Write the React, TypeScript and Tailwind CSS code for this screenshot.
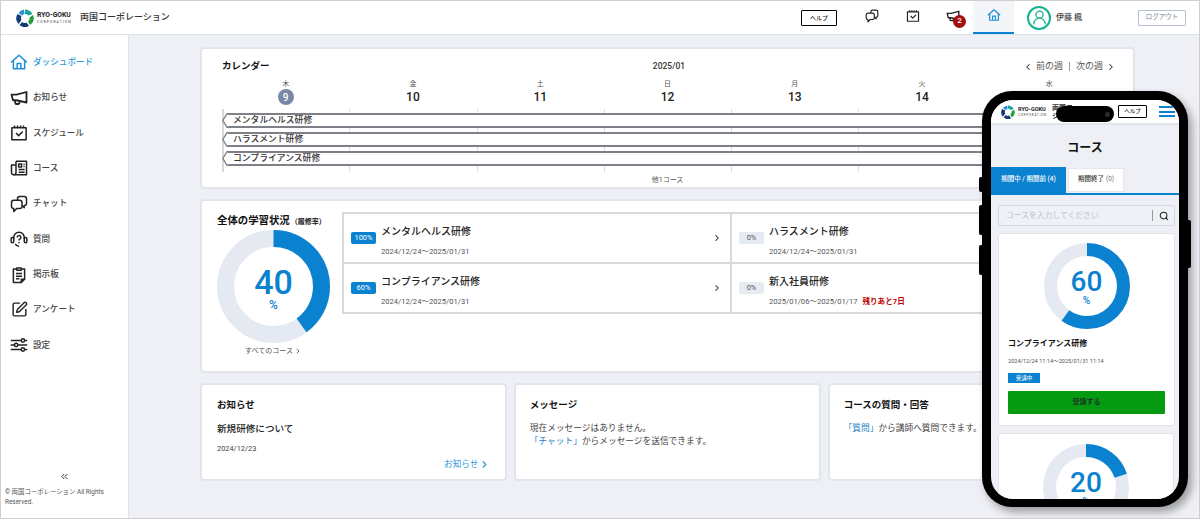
import { ChevronLeft, ChevronRight, ChevronsLeft, Search, SquarePen, UserRound } from 'lucide-react';
import type { ReactNode } from 'react';

const BLUE = '#0a82d0';

type IconProps = { size?: number; sw?: number };

const Svg = ({ size = 18, sw = 2, children }: IconProps & { children: ReactNode }) => (
  <svg width={size} height={size} viewBox="0 0 24 24" fill="none" stroke="currentColor" strokeWidth={sw} strokeLinejoin="round">
    {children}
  </svg>
);

const HomeIcon = (p: IconProps) => (
  <Svg {...p}>
    <path d="M1.5 12.5 12 3l10.5 9.5" />
    <path d="M4.5 10v11h15V10" />
    <path d="M9.5 21v-7h5v7" />
  </Svg>
);

const MegaphoneIcon = (p: IconProps) => (
  <Svg {...p}>
    <path d="M2 7.5h6.5L22 4v14L8.5 15H4z" />
    <path d="M7 15.5v3A1.5 1.5 0 0 0 8.500 20H11a1.500 1.500 0 0 0 1.500-1.500V17" />
  </Svg>
);

const CalendarIcon = (p: IconProps) => (
  <Svg {...p}>
    <path d="M2.500 5h19v16h-19z" />
    <path d="M6 2v3M10 2v3M14 2v3M18 2v3" />
    <path d="m8 12 3.500 3.500L17 10" />
  </Svg>
);

const NewspaperIcon = (p: IconProps) => (
  <Svg {...p}>
    <path d="M8 3h14v18H5a3 3 0 0 1-3-3V8h6" />
    <path d="M8 3v15a3 3 0 0 1-3 3" />
    <path d="M11.500 6.500h4v4h-4zM18 7h1.500M18 10h1.500M11.500 14h8M11.500 17.500h8" />
  </Svg>
);

const ChatIcon = (p: IconProps) => (
  <Svg {...p}>
    <path d="M10 7V5a3 3 0 0 1 3-3h6a3 3 0 0 1 3 3v6a3 3 0 0 1-3 3v3l-3-3" />
    <path d="M5 7h8a3 3 0 0 1 3 3v5a3 3 0 0 1-3 3H9l-4 4v-4a3 3 0 0 1-3-3v-5a3 3 0 0 1 3-3z" />
  </Svg>
);

const HeadsetIcon = (p: IconProps) => (
  <Svg {...p}>
    <path d="M5 12v-2a7 7 0 0 1 14 0v2" />
    <rect x="1.500" y="10" width="3.500" height="7" rx="1.700" />
    <rect x="19" y="10" width="3.500" height="7" rx="1.700" />
    <path d="M9.500 10a2.500 2.500 0 1 1 3.600 2.200c-.8.4-1.100 1-1.100 1.800" />
    <path d="M12 16v1.500" />
    <path d="M7 18.500c1 2 3 3 5 3" />
  </Svg>
);

const BoardIcon = (p: IconProps) => (
  <Svg {...p}>
    <path d="M9 4H4.500v18H15l4.500-4.500V4H15" />
    <path d="M9 2.500h6v3H9z" />
    <path d="M8 10h8M8 13.500h8M8 17h4.500" />
    <path d="M15 22v-4.500h4.500" />
  </Svg>
);

const SlidersIcon = (p: IconProps) => (
  <Svg {...p}>
    <path d="M1 6h14M19.500 6H23M1 12h5M10.500 12H23M1 18h14M19.500 18H23" />
    <circle cx="17.200" cy="6" r="2.200" />
    <circle cx="8.200" cy="12" r="2.200" />
    <circle cx="17.200" cy="18" r="2.200" />
  </Svg>
);

const Logo = ({ size }: { size: number }) => (
  <svg width={size} height={size} viewBox="0 0 36 36" fill="none">
    <path d="M18 1a17 17 0 0 1 15 9l-8 3a8 8 0 0 0-7-3z" fill="#1aa6a0" />
    <path d="M34 12a17 17 0 0 1-6 20l-4-7a8 8 0 0 0 3-8z" fill="#1f9d3a" />
    <path d="M26 34a17 17 0 0 1-19-2l5-6a8 8 0 0 0 9 1z" fill="#123a78" />
    <path d="M5 30A17 17 0 0 1 3 10l8 4a8 8 0 0 0 0 8z" fill="#123a78" />
    <path d="M5 8a17 17 0 0 1 11-7l1 9a8 8 0 0 0-5 3z" fill="#2b8fd6" />
  </svg>
);

const LogoText = ({ small }: { small?: boolean }) => (
  <div className={`flex flex-col whitespace-nowrap ${small ? 'w-[28px]' : 'w-[34px]'}`}>
    <span className={small ? 'text-[5.600px] leading-[7px] font-bold text-[#222]' : 'text-[6.800px] leading-[8px] font-bold text-[#222]'}>
      RYO-GOKU
    </span>
    <span className={small ? 'text-[3px] leading-[5px] tracking-[0.800px] text-[#444]' : 'text-[3.500px] leading-[6px] tracking-[1px] text-[#444]'}>
      CORPORATION
    </span>
  </div>
);

const navItems: { label: string; icon: ReactNode; active?: boolean }[] = [
  { label: 'ダッシュボード', icon: <HomeIcon />, active: true },
  { label: 'お知らせ', icon: <MegaphoneIcon sw={2.400} /> },
  { label: 'スケジュール', icon: <CalendarIcon /> },
  { label: 'コース', icon: <NewspaperIcon /> },
  { label: 'チャット', icon: <ChatIcon /> },
  { label: '質問', icon: <HeadsetIcon /> },
  { label: '掲示板', icon: <BoardIcon /> },
  { label: 'アンケート', icon: <SquarePen size={17} strokeWidth={2} /> },
  { label: '設定', icon: <SlidersIcon /> },
];

const Donut = ({ percent, size, stroke }: { percent: number; size: number; stroke: number }) => {
  const r = (size - stroke) / 2;
  const c = 2 * Math.PI * r;
  return (
    <svg width={size} height={size} viewBox={`0 0 ${size} ${size}`} className="-rotate-90">
      <circle cx={size / 2} cy={size / 2} r={r} fill="none" stroke="#e4e9f2" strokeWidth={stroke} />
      <circle
        cx={size / 2}
        cy={size / 2}
        r={r}
        fill="none"
        stroke={BLUE}
        strokeWidth={stroke}
        strokeDasharray={`${(c * percent) / 100} ${c}`}
      />
    </svg>
  );
};

const DonutBlock = ({ percent, size, stroke, num, unit }: { percent: number; size: number; stroke: number; num: string; unit: string }) => (
  <div className="relative shrink-0" style={{ width: size, height: size }}>
    <Donut percent={percent} size={size} stroke={stroke} />
    <div className="absolute inset-0 flex flex-col items-center justify-center text-[#0a82d0]">
      <span className={num}>{percent}</span>
      <span className={unit}>%</span>
    </div>
  </div>
);

const days = [
  { w: '木', d: '9', today: true },
  { w: '金', d: '10' },
  { w: '土', d: '11' },
  { w: '日', d: '12' },
  { w: '月', d: '13' },
  { w: '火', d: '14' },
  { w: '水', d: '15' },
];

const CalendarBar = ({ label }: { label: string }) => (
  <div className="flex h-[15px]">
    <svg width="6" height="15" viewBox="0 0 6 15" fill="#fff" stroke="#7d8087" strokeWidth="1.400" className="shrink-0">
      <path d="M6 .7H5L.8 7.500 5 14.300h1" />
    </svg>
    <div className="flex flex-1 items-center border-y-2 border-[#7d8087] bg-white pl-[5px] text-[8.800px] font-medium text-[#333]">
      {label}
    </div>
  </div>
);

const courses = [
  { badge: '100%', on: true, name: 'メンタルヘルス研修', date: '2024/12/24〜2025/01/31' },
  { badge: '0%', on: false, name: 'ハラスメント研修', date: '2024/12/24〜2025/01/31' },
  { badge: '60%', on: true, name: 'コンプライアンス研修', date: '2024/12/24〜2025/01/31' },
  { badge: '0%', on: false, name: '新入社員研修', date: '2025/01/06〜2025/01/17', warn: '残りあと7日' },
];

const Card = ({ className, children }: { className: string; children: ReactNode }) => (
  <section className={`rounded-[4px] border-2 border-[#e3e5ec] bg-white ${className}`}>{children}</section>
);

const Phone = () => (
  <div className="absolute left-[981px] top-[90px] h-[416px] w-[206px] rounded-[30px] bg-black p-[9px] shadow-[4px_5px_8px_rgba(0,0,0,0.35)]">
    <span className="absolute -left-[3px] top-[86px] h-[15px] w-[3px] rounded-l-[2px] bg-black" />
    <span className="absolute -left-[3px] top-[114px] h-[30px] w-[3px] rounded-l-[2px] bg-black" />
    <span className="absolute -left-[3px] top-[154px] h-[30px] w-[3px] rounded-l-[2px] bg-black" />
    <span className="absolute -right-[3px] top-[129px] h-[48px] w-[3px] rounded-r-[2px] bg-black" />
    <div className="absolute left-[74px] top-[15px] z-10 flex h-[16px] w-[58px] items-center justify-end rounded-full bg-black pr-[4px]">
      <span className="h-[5px] w-[5px] rounded-full bg-[#2a2a2a]" />
    </div>
    <div className="flex h-[399px] w-[188px] flex-col overflow-hidden rounded-[22px] bg-[#eef0f5]">
      <header className="flex h-[25px] shrink-0 items-center border-b-2 border-[#e2e6ef] bg-white pl-[10px] pr-[4px]">
        <Logo size={14} />
        <div className="ml-[3px]">
          <LogoText small />
        </div>
        <span className="ml-[6px] w-[20px] overflow-hidden whitespace-nowrap text-[7px] leading-[8px] font-bold text-[#333]">
          両国コー
          <br />
          ション
        </span>
        <div className="ml-auto flex h-[13px] w-[29px] items-center justify-center rounded-[1px] border border-black text-[5.500px] font-medium">ヘルプ</div>
        <div className="ml-[12px] flex w-[16px] flex-col gap-[2.500px]">
          <span className="h-[2px] bg-[#0a82d0]" />
          <span className="h-[2px] bg-[#0a82d0]" />
          <span className="h-[2px] bg-[#0a82d0]" />
        </div>
      </header>
      <h2 className="mt-[14px] text-center text-[12px] leading-[18px] font-bold text-[#111]">コース</h2>
      <div className="mt-[10px] flex h-[28px] shrink-0 items-end border-b-[2px] border-[#0a82d0]">
        <div className="flex h-[26px] w-[75px] items-center justify-center bg-[#0a82d0] text-[6.500px] font-medium text-white">期間中 / 期間前 (4)</div>
        <div className="mb-[1px] ml-[2px] flex h-[24px] w-[56px] items-center justify-center border border-[#e2e6ef] bg-white text-[6.500px] font-medium text-[#333]">
          期間終了 <span className="ml-[2px] font-normal text-[#777]">(0)</span>
        </div>
      </div>
      <div className="ml-[7px] mr-[4px] mt-[10px] flex h-[21px] shrink-0 items-center rounded-[2px] border border-[#d5d8e0] bg-[#eef1f6] pl-[7px] pr-[5px]">
        <span className="flex-1 text-[7.800px] text-[#bcc3d0]">コースを入力してください</span>
        <span className="h-[11px] w-px bg-[#999]" />
        <Search size={10} strokeWidth={2.500} className="ml-[6px] text-[#222]" />
      </div>
      <div className="ml-[7px] mr-[4px] mt-[7px] flex h-[193px] shrink-0 flex-col items-center rounded-[3px] border border-[#e2e4ea] bg-white px-[9px] pt-[9px]">
        <DonutBlock percent={60} size={86} stroke={13} num="mt-[2px] text-[28px] leading-[28px] font-medium" unit="text-[10px] leading-[10px] font-medium" />
        <p className="mt-[9px] w-full text-[8px] leading-[12px] font-bold text-[#111]">コンプライアンス研修</p>
        <p className="mt-[7px] w-full text-[5.600px] leading-[8px] text-[#555]">2024/12/24 11:14〜2025/01/31 11:14</p>
        <div className="mt-[8px] w-full">
          <span className="flex h-[10px] w-[32px] items-center justify-center bg-[#0a82d0] text-[5.500px] text-white">受講中</span>
        </div>
        <button className="mt-[8px] h-[23px] w-full shrink-0 rounded-[1px] bg-[#049b12] text-[7px] font-medium text-[#222]">受講する</button>
      </div>
      <div className="ml-[7px] mr-[5px] mt-[7px] flex shrink-0 flex-col items-center rounded-[3px] border border-[#e2e4ea] bg-white pt-[10px]">
        <DonutBlock percent={20} size={86} stroke={13} num="mt-[2px] text-[28px] leading-[28px] font-medium" unit="text-[10px] leading-[10px] font-medium" />
      </div>
    </div>
  </div>
);

export default function App() {
  return (
    <div className="relative flex h-[519px] w-[1200px] flex-col overflow-hidden border border-[#cfcfcf] bg-[#eef0f5] font-['Roboto','Noto_Sans_CJK_JP',sans-serif] text-[#222]">
      {/* top bar */}
      <header className="flex h-[34px] shrink-0 items-stretch border-b border-[#dde3ee] bg-white">
        <div className="ml-[15px] flex items-center">
          <Logo size={18} />
          <div className="ml-[3px]">
            <LogoText />
          </div>
          <span className="ml-[9px] text-[9px] font-medium text-[#333]">両国コーポレーション</span>
        </div>
        <div className="ml-auto flex items-center">
          <div className="flex h-[16px] w-[36px] items-center justify-center rounded-[1px] border-[1.500px] border-black text-[6px] font-medium">ヘルプ</div>
          <div className="mb-[4px] ml-[25px] flex w-[20px] justify-center">
            <ChatIcon size={14} />
          </div>
          <div className="mb-[4px] ml-[21px] flex w-[20px] justify-center">
            <CalendarIcon size={14} />
          </div>
          <div className="relative mb-[4px] ml-[20px] flex w-[20px] justify-center">
            <MegaphoneIcon size={14} sw={2.400} />
            <span className="absolute left-[10px] top-[6px] flex h-[13px] w-[13px] items-center justify-center rounded-full bg-[#a50e0e] text-[8px] font-medium text-white">2</span>
          </div>
          <div className="ml-[10px] flex h-full w-[41px] items-center justify-center border-b-2 border-[#0a82d0] bg-[#f4f5f8] pb-[4px] text-[#1e90d8]">
            <HomeIcon size={14} />
          </div>
          <div className="ml-[13px] flex h-[24px] w-[24px] items-center justify-center rounded-full border-2 border-[#12b292] text-[#12b292]">
            <UserRound size={17} strokeWidth={1.800} />
          </div>
          <span className="ml-[5px] text-[8px] font-medium text-[#444]">伊藤 楓</span>
          <div className="ml-[56px] mr-[13px] flex h-[16px] w-[48px] items-center justify-center rounded-[1px] border-[1.500px] border-[#b9c2d4] text-[6.500px] font-medium text-[#98a2b5]">ログアウト</div>
        </div>
      </header>

      <div className="flex min-h-0 flex-1">
        {/* side nav */}
        <aside className="flex w-[128px] shrink-0 flex-col border-r border-[#dde3ee] bg-white">
          <nav className="flex flex-col pt-[9.500px]">
            {navItems.map((item) => (
              <div
                key={item.label}
                className={`flex h-[35.400px] items-center pl-[9px] ${item.active ? 'text-[#1e90d8]' : 'text-[#222]'}`}
              >
                <span className="flex w-[18px] justify-center">{item.icon}</span>
                <span className={`ml-[5px] text-[8.600px] font-medium ${item.active ? 'text-[#2a9be0]' : 'text-[#444]'}`}>{item.label}</span>
              </div>
            ))}
          </nav>
          <div className="mt-auto pb-[11px]">
            <div className="flex justify-center">
              <ChevronsLeft size={11} strokeWidth={2} />
            </div>
            <p className="mt-[5px] px-[4px] text-[6.400px] leading-[10px] text-[#555]">© 両国コーポレーション All Rights Reserved.</p>
          </div>
        </aside>

        {/* dashboard */}
        <main className="ml-[71px] flex w-[935px] flex-col gap-[10px] pt-[12px]">
          <Card className="h-[142px] px-[20px] pt-[8px]">
            <div className="flex h-[19px] items-center justify-between">
              <h2 className="w-[200px] text-[9.500px] font-bold text-[#111]">カレンダー</h2>
              <span className="text-[8.500px] font-medium text-[#333]">2025/01</span>
              <div className="-mr-[3px] flex w-[200px] items-center justify-end text-[9px] text-[#555]">
                <ChevronLeft size={10} strokeWidth={2.500} className="text-[#333]" />
                <span className="ml-[3px]">前の週</span>
                <span className="mx-[6px] h-[9px] w-px bg-[#999]" />
                <span>次の週</span>
                <ChevronRight size={10} strokeWidth={2.500} className="ml-[3px] text-[#333]" />
              </div>
            </div>
            <div className="grid h-[33px] grid-cols-7 pt-[3px]">
              {days.map((day) => (
                <div key={day.w} className="flex flex-col items-center">
                  <span className="text-[7px] leading-[10px] text-[#555]">{day.w}</span>
                  {day.today ? (
                    <span className="flex h-[16px] w-[16px] items-center justify-center rounded-full bg-[#7a88a8] text-[10px] font-medium text-white">{day.d}</span>
                  ) : (
                    <span className="text-[12px] leading-[16px] font-medium text-[#222]">{day.d}</span>
                  )}
                </div>
              ))}
            </div>
            <div className="relative h-[63px]">
              <div className="absolute inset-0 grid grid-cols-7">
                {days.map((day, i) => (
                  <span key={day.w} className={i === 0 ? 'border-l-2 border-[#d8d8d8]' : 'border-l border-[#dcdcdc]'} />
                ))}
              </div>
              <div className="relative flex flex-col gap-[4px] pt-[4px]">
                <CalendarBar label="メンタルヘルス研修" />
                <CalendarBar label="ハラスメント研修" />
                <CalendarBar label="コンプライアンス研修" />
              </div>
            </div>
            <p className="mt-[3px] text-center text-[7px] leading-[10px] text-[#555]">他1コース</p>
          </Card>

          <Card className="flex h-[174px] pl-[15px] pt-[11px]">
            <div className="flex w-[125px] shrink-0 flex-col">
              <h2 className="whitespace-nowrap pt-[1px] text-[10.400px] leading-[16px] font-bold text-[#111]">
                全体の学習状況<span className="ml-[1px] text-[7px]">（履修率）</span>
              </h2>
              <div>
                <DonutBlock percent={40} size={113} stroke={17} num="mt-[2px] text-[34px] leading-[34px] font-medium" unit="text-[12px] leading-[12px] font-medium" />
              </div>
              <div className="mt-[3px] flex w-[113px] items-center justify-center text-[7px] text-[#555]">
                すべてのコース
                <ChevronRight size={8} strokeWidth={2.500} className="ml-[1px]" />
              </div>
            </div>
            <div className="grid h-[102px] w-[778px] grid-cols-[388px_1fr] border-2 border-[#d9d9d9]">
              {courses.map((c, i) => (
                <div
                  key={c.name}
                  className={`flex items-center pl-[7px] ${i % 2 === 0 ? 'border-r-2 border-[#d9d9d9]' : ''} ${i < 2 ? 'border-b-2 border-[#d9d9d9]' : ''}`}
                >
                  <span className={`flex h-[12px] w-[25px] shrink-0 items-center justify-center rounded-[2px] text-[7.500px] ${c.on ? 'bg-[#0a82d0] text-white' : 'bg-[#e6eaf2] text-[#555]'}`}>
                    {c.badge}
                  </span>
                  <div className="ml-[5px] flex-1 pt-[6px]">
                    <p className="text-[10px] leading-[14px] font-medium text-[#222]">{c.name}</p>
                    <p className="mt-[8px] text-[7.600px] leading-[10px] text-[#555]">
                      {c.date}
                      {c.warn && <span className="ml-[5px] font-bold text-[#c00000]">{c.warn}</span>}
                    </p>
                  </div>
                  <ChevronRight size={10} strokeWidth={2.500} className="mr-[8px] text-[#223]" />
                </div>
              ))}
            </div>
          </Card>

          <div className="grid h-[98px] grid-cols-3 gap-[6.500px]">
            <Card className="flex flex-col px-[15px] pt-[13px]">
              <h3 className="text-[9.500px] leading-[14px] font-bold text-[#111]">お知らせ</h3>
              <p className="mt-[10px] text-[9.600px] leading-[14px] font-medium text-[#222]">新規研修について</p>
              <p className="mt-[8px] text-[7.400px] leading-[10px] text-[#444]">2024/12/23</p>
              <div className="mb-[8px] mt-auto flex items-center justify-end text-[8.600px] text-[#2a9be0]">
                お知らせ
                <ChevronRight size={11} strokeWidth={2.500} className="ml-[1px]" />
              </div>
            </Card>
            <Card className="px-[14px] pt-[13px]">
              <h3 className="text-[9.500px] leading-[14px] font-bold text-[#111]">メッセージ</h3>
              <p className="mt-[10px] text-[8.700px] leading-[13px] text-[#444]">
                現在メッセージはありません。
                <br />
                <span className="text-[#1e7fc8]">「チャット」</span>からメッセージを送信できます。
              </p>
            </Card>
            <Card className="px-[14px] pt-[13px]">
              <h3 className="text-[9.500px] leading-[14px] font-bold text-[#111]">コースの質問・回答</h3>
              <p className="mt-[10px] whitespace-nowrap text-[8.700px] leading-[13px] text-[#444]">
                <span className="text-[#1e7fc8]">「質問」</span>から講師へ質問できます。
              </p>
            </Card>
          </div>
        </main>
      </div>

      <Phone />
    </div>
  );
}
